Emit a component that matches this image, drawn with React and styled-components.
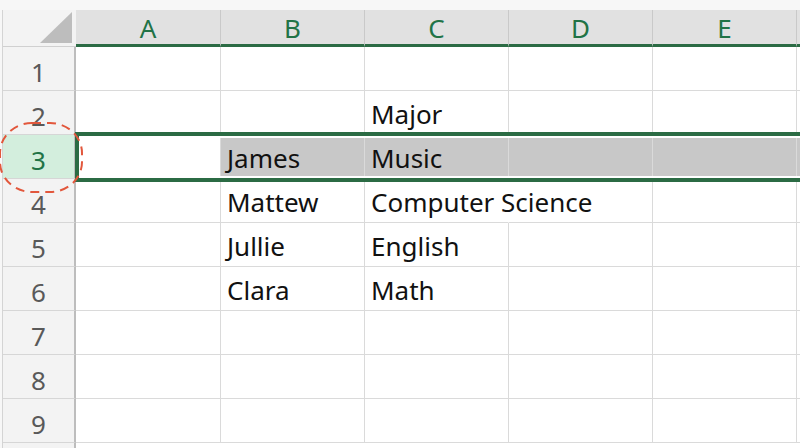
import React from 'react'
import styled, { createGlobalStyle } from 'styled-components'

const GREEN = '#2b6b44'

const GlobalStyle = createGlobalStyle`
  html, body {
    margin: 0;
    padding: 0;
    background: #ffffff;
  }
  body {
    font-family: "Noto Sans", "Open Sans", sans-serif;
  }
`

const Page = styled.div`
  position: relative;
  width: 800px;
  height: 448px;
  overflow: hidden;
  background: #f7f7f7;
  padding: 10px 0 0 2px;
  box-sizing: border-box;
`

const Sheet = styled.div`
  border-left: 1px solid #d4d4d4;
  background: #ffffff;
  display: flex;
  flex-direction: column;
  height: 100%;
`

const HeaderRow = styled.div`
  display: flex;
  height: 37px;
  flex-shrink: 0;
`

const Corner = styled.div`
  width: 73px;
  flex-shrink: 0;
  box-sizing: border-box;
  background: #f3f3f3;
  border-bottom: 1px solid #d0d0d0;
  display: flex;
  align-items: flex-end;
  justify-content: flex-end;
  padding: 0 4px 3px 0;
`

const ColumnHeader = styled.div`
  width: ${(p) => p.width}px;
  flex-shrink: 0;
  box-sizing: border-box;
  background: #e1e1e1;
  border-right: 1px solid #c9c9c9;
  border-bottom: 3px solid ${GREEN};
  color: #217346;
  font-size: 26px;
  line-height: 36px;
  text-align: center;
`

const Filler = styled(ColumnHeader)`
  flex: 1;
  border-right: none;
`

const Row = styled.div`
  position: relative;
  display: flex;
  height: 44px;
  flex-shrink: 0;
`

const RowHeader = styled.div`
  width: 73px;
  flex-shrink: 0;
  box-sizing: border-box;
  border-right: 2px solid #bdbdbd;
  border-bottom: 1px solid #d6d6d6;
  background: ${(p) => (p.selected ? '#d3eedd' : '#f3f3f3')};
  color: ${(p) => (p.selected ? '#217346' : '#595959')};
  font-size: 26px;
  display: flex;
  align-items: center;
  justify-content: center;
  padding-top: 6px;
`

const Cell = styled.div`
  width: ${(p) => p.width}px;
  flex-shrink: 0;
  box-sizing: border-box;
  border-right: 1px solid ${(p) => (p.spill ? 'transparent' : '#dadada')};
  border-bottom: 1px solid #dadada;
  background: ${(p) => (p.shaded ? '#c8c8c8' : 'transparent')};
  color: #111111;
  font-size: 26px;
  padding: 3px 0 0 6px;
  display: flex;
  align-items: center;
  white-space: nowrap;
  overflow: visible;
`

const RestCell = styled(Cell)`
  flex: 1;
  border-right: none;
`

const BottomRow = styled.div`
  display: flex;
  flex: 1;
`

const BottomHeader = styled.div`
  width: 73px;
  flex-shrink: 0;
  box-sizing: border-box;
  border-right: 2px solid #bdbdbd;
  background: #f3f3f3;
`

const Selection = styled.div`
  position: absolute;
  left: 72px;
  top: -3px;
  bottom: -3px;
  right: -10px;
  border: 4px solid ${GREEN};
  box-shadow: inset 0 0 0 2px #ffffff;
  pointer-events: none;
  z-index: 2;
`

const Annotation = styled.svg`
  position: absolute;
  left: -2px;
  top: 121px;
  z-index: 3;
`

const columns = [
  { name: 'A', width: 145 },
  { name: 'B', width: 144 },
  { name: 'C', width: 144 },
  { name: 'D', width: 144 },
  { name: 'E', width: 144 },
]

const data = {
  2: ['', '', 'Major', '', ''],
  3: ['', 'James', 'Music', '', ''],
  4: ['', 'Mattew', 'Computer Science', '', ''],
  5: ['', 'Jullie', 'English', '', ''],
  6: ['', 'Clara', 'Math', '', ''],
}

const SELECTED_ROW = 3

// rough width check so long text runs over an empty neighbour, like a sheet does
const spills = (values, i) =>
  values[i].length * 13 > columns[i].width - 8 && !values[i + 1]

const CornerTriangle = () => (
  <svg width="32" height="31" viewBox="0 0 32 31">
    <polygon points="0,31 32,0 32,31" fill="#bdbdbd" />
  </svg>
)

const App = () => {
  const rows = Array.from({ length: 9 }, (_, i) => i + 1)

  return (
    <>
      <GlobalStyle />
      <Page>
        <Sheet>
          <HeaderRow>
            <Corner>
              <CornerTriangle />
            </Corner>
            {columns.map((c) => (
              <ColumnHeader key={c.name} width={c.width}>
                {c.name}
              </ColumnHeader>
            ))}
            <Filler />
          </HeaderRow>
          {rows.map((r) => {
            const values = data[r] || ['', '', '', '', '']
            const selected = r === SELECTED_ROW
            return (
              <Row key={r}>
                <RowHeader selected={selected}>{r}</RowHeader>
                {columns.map((c, i) => (
                  <Cell
                    key={c.name}
                    width={c.width}
                    shaded={selected && i > 0}
                    spill={spills(values, i)}
                  >
                    {values[i]}
                  </Cell>
                ))}
                <RestCell shaded={selected} />
                {selected && <Selection />}
              </Row>
            )
          })}
          <BottomRow>
            <BottomHeader />
          </BottomRow>
        </Sheet>
        <Annotation width="88" height="74" viewBox="0 0 88 74">
          <rect
            x="2"
            y="2"
            width="82"
            height="69"
            rx="32"
            ry="30"
            fill="none"
            stroke="#e2573c"
            strokeWidth="2"
            strokeDasharray="9 6"
          />
        </Annotation>
      </Page>
    </>
  )
}

export default App
